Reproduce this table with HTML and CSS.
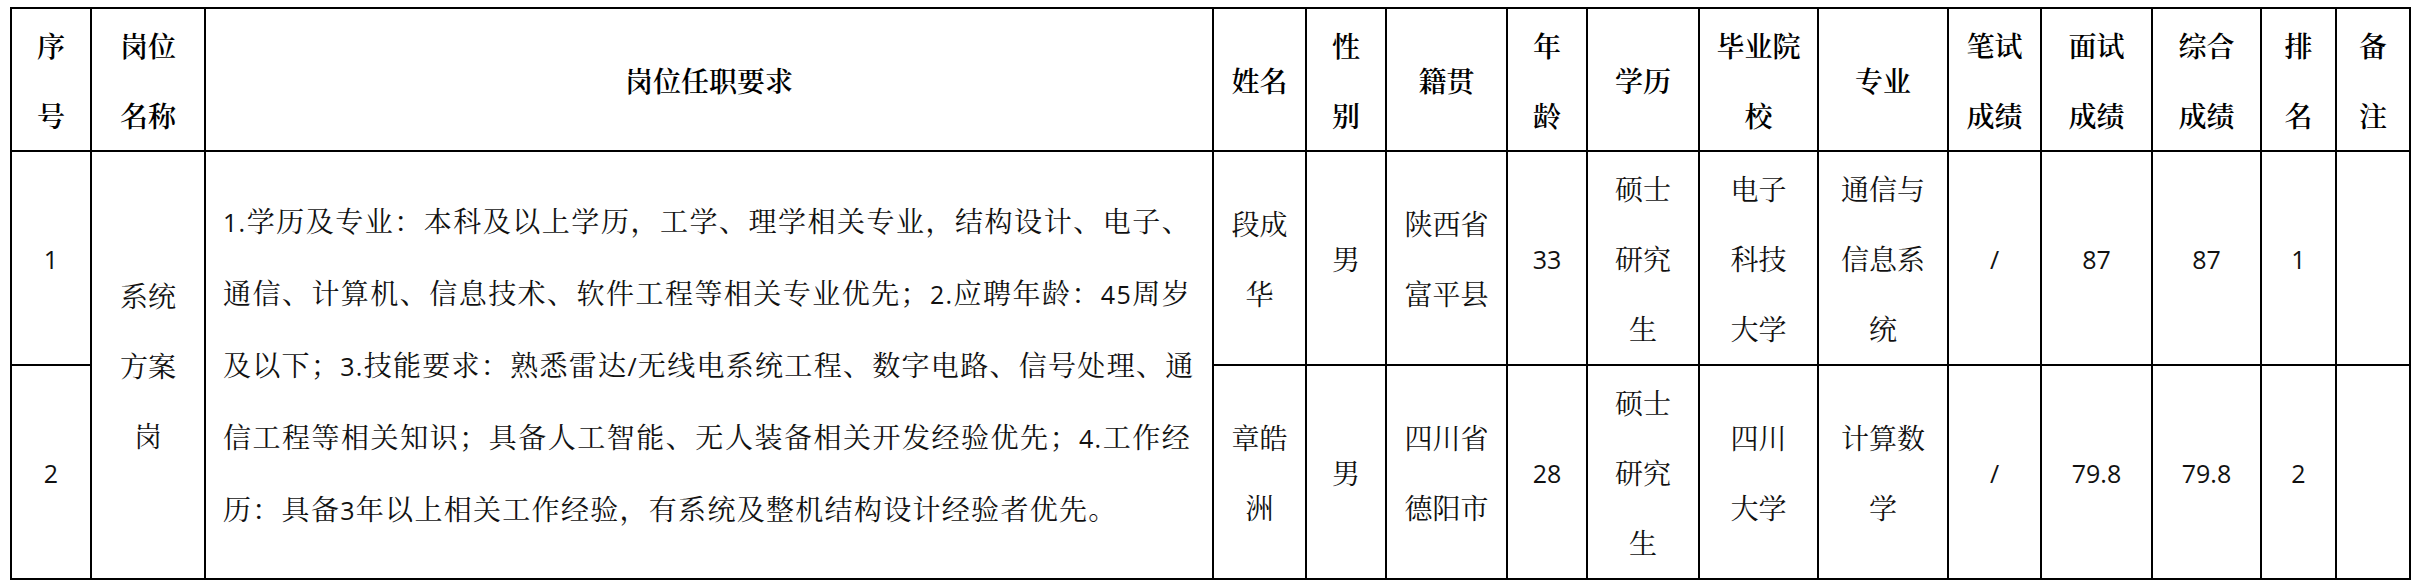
FILE: index.html
```html
<!DOCTYPE html>
<html lang="zh-CN">
<head>
<meta charset="utf-8">
<title>岗位任职要求</title>
<link rel="stylesheet" href="styles.css">
</head>
<body>
<table class="grid">
  <colgroup>
    <col class="c1"><col class="c2"><col class="c3"><col class="c4"><col class="c5">
    <col class="c6"><col class="c7"><col class="c8"><col class="c9"><col class="c10">
    <col class="c11"><col class="c12"><col class="c13"><col class="c14"><col class="c15">
  </colgroup>
  <thead>
    <tr class="head">
      <th>序<br>号</th>
      <th>岗位<br>名称</th>
      <th>岗位任职要求</th>
      <th>姓名</th>
      <th>性<br>别</th>
      <th>籍贯</th>
      <th>年<br>龄</th>
      <th>学历</th>
      <th>毕业院<br>校</th>
      <th>专业</th>
      <th>笔试<br>成绩</th>
      <th>面试<br>成绩</th>
      <th>综合<br>成绩</th>
      <th>排<br>名</th>
      <th>备<br>注</th>
    </tr>
  </thead>
  <tbody>
    <tr class="row">
      <td><span class="n">1</span></td>
      <td rowspan="2">系统<br>方案<br>岗</td>
      <td rowspan="2" class="desc">
        <div class="line full"><span class="n">1.</span>学历及专业：本科及以上学历，工学、理学相关专业，结构设计、电子、</div>
        <div class="line full">通信、计算机、信息技术、软件工程等相关专业优先；<span class="n">2.</span>应聘年龄：<span class="n">45</span>周岁</div>
        <div class="line full">及以下；<span class="n">3.</span>技能要求：熟悉雷达<span class="n">/</span>无线电系统工程、数字电路、信号处理、通</div>
        <div class="line full">信工程等相关知识；具备人工智能、无人装备相关开发经验优先；<span class="n">4.</span>工作经</div>
        <div class="line">历：具备<span class="n">3</span>年以上相关工作经验，有系统及整机结构设计经验者优先。</div>
      </td>
      <td>段成<br>华</td>
      <td>男</td>
      <td>陕西省<br>富平县</td>
      <td><span class="n">33</span></td>
      <td>硕士<br>研究<br>生</td>
      <td>电子<br>科技<br>大学</td>
      <td>通信与<br>信息系<br>统</td>
      <td><span class="n">/</span></td>
      <td><span class="n">87</span></td>
      <td><span class="n">87</span></td>
      <td><span class="n">1</span></td>
      <td></td>
    </tr>
    <tr class="row">
      <td><span class="n">2</span></td>
      <td>章皓<br>洲</td>
      <td>男</td>
      <td>四川省<br>德阳市</td>
      <td><span class="n">28</span></td>
      <td>硕士<br>研究<br>生</td>
      <td>四川<br>大学</td>
      <td>计算数<br>学</td>
      <td><span class="n">/</span></td>
      <td><span class="n">79.8</span></td>
      <td><span class="n">79.8</span></td>
      <td><span class="n">2</span></td>
      <td></td>
    </tr>
  </tbody>
</table>
</body>
</html>
```

FILE: styles.css
```css
html, body {
  margin: 0;
  padding: 0;
  background: #ffffff;
}

body {
  font-family: "Noto Serif CJK SC", "Noto Sans CJK SC", serif;
  font-size: 28px;
  color: #111111;
}

.grid {
  border-collapse: collapse;
  table-layout: fixed;
  width: 2401px;
  margin: 7px 0 0 10px;
}

.c1 { width: 80px; }
.c2 { width: 114px; }
.c3 { width: 1008px; }
.c4 { width: 93px; }
.c5 { width: 80px; }
.c6 { width: 121px; }
.c7 { width: 80px; }
.c8 { width: 112px; }
.c9 { width: 119px; }
.c10 { width: 130px; }
.c11 { width: 93px; }
.c12 { width: 111px; }
.c13 { width: 109px; }
.c14 { width: 75px; }
.c15 { width: 74px; }

.grid th,
.grid td {
  border: 2px solid #000000;
  padding: 0;
  text-align: center;
  vertical-align: middle;
  line-height: 70px;
  white-space: nowrap;
  overflow: hidden;
}

.grid th {
  font-weight: 600;
  color: #000000;
}

.head { height: 143px; }
.row { height: 214px; }

.n {
  font-family: "Open Sans", "Liberation Sans", sans-serif;
  font-size: 25px;
}

.grid td.desc {
  text-align: left;
  padding: 0 21px 0 17px;
  letter-spacing: 1.3px;
}

.line {
  white-space: nowrap;
}

.line.full {
  text-align: justify;
  text-align-last: justify;
}
```
